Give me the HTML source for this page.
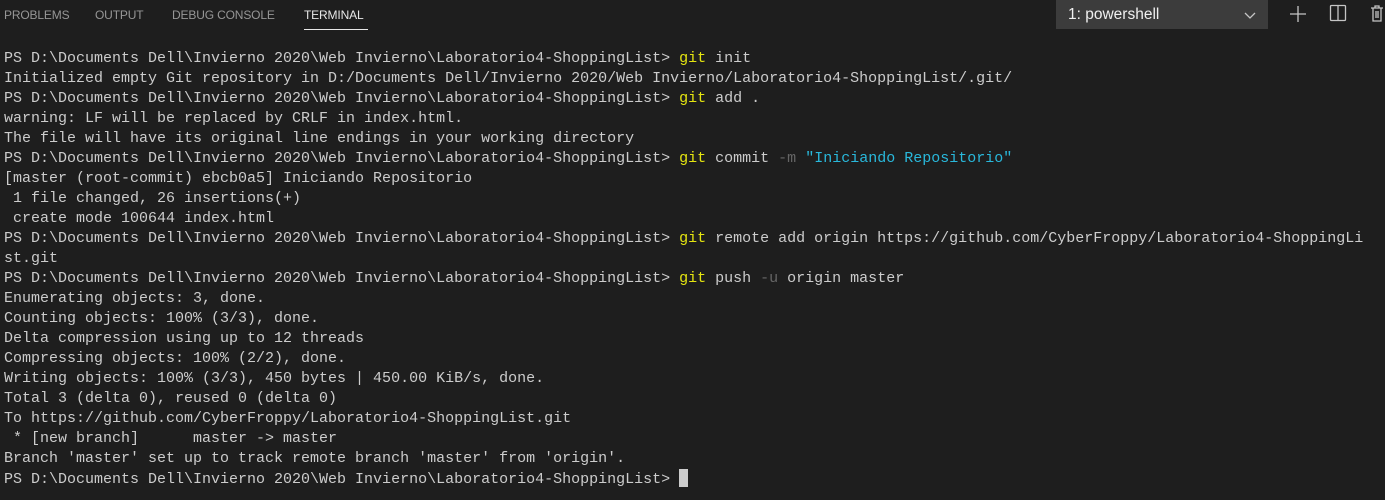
<!DOCTYPE html>
<html><head><meta charset="utf-8"><style>
body{margin:0;width:1385px;height:500px;background:#1e1e1e;overflow:hidden;position:relative;font-family:"Liberation Sans",sans-serif}
.tab{position:absolute;top:8px;font-size:12px;color:#969696;letter-spacing:-0.15px}
.act{color:#e7e7e7}
.ul{position:absolute;left:304px;top:29px;width:64px;height:1px;background:#e7e7e7}
.dd{position:absolute;left:1056px;top:0;width:212px;height:29px;background:#3c3c3c;color:#f0f0f0;font-size:15.5px}
pre{position:absolute;left:4px;top:49px;margin:0;font-family:"Liberation Mono",monospace;font-size:15px;line-height:20px;color:#cccccc}
.y{color:#e5e510}.g{color:#666666}.b{color:#29b8db}
.cur{display:inline-block;width:9px;height:18px;background:#cccccc;vertical-align:-4px}
</style></head><body>
<div class="tab" style="left:4px">PROBLEMS</div>
<div class="tab" style="left:95px">OUTPUT</div>
<div class="tab" style="left:172px">DEBUG CONSOLE</div>
<div class="tab act" style="left:304px">TERMINAL</div>
<div class="ul"></div>
<div class="dd"><span style="position:absolute;left:12px;top:6px">1: powershell</span>
<svg style="position:absolute;left:187px;top:10px" width="14" height="10"><path d="M2 3l5 5 5-5" stroke="#c5c5c5" stroke-width="1.3" fill="none"/></svg></div>
<svg style="position:absolute;left:1288px;top:4px" width="20" height="20"><path d="M10 2v16M2 10h16" stroke="#c5c5c5" stroke-width="1.3"/></svg>
<svg style="position:absolute;left:1329px;top:4px" width="18" height="18"><rect x="1.5" y="1.5" width="15" height="15" rx="1" stroke="#c5c5c5" stroke-width="1.3" fill="none"/><path d="M9 2v14" stroke="#c5c5c5" stroke-width="1.3"/></svg>
<svg style="position:absolute;left:1369px;top:3px" width="16" height="20"><path d="M2 5h12M6 5V3h4v2M4 5v13h8V5M7 8v7M9 8v7" stroke="#c5c5c5" stroke-width="1.3" fill="none"/></svg>
<pre>PS D:\Documents Dell\Invierno 2020\Web Invierno\Laboratorio4-ShoppingList&gt; <span class="y">git</span> init
Initialized empty Git repository in D:/Documents Dell/Invierno 2020/Web Invierno/Laboratorio4-ShoppingList/.git/
PS D:\Documents Dell\Invierno 2020\Web Invierno\Laboratorio4-ShoppingList&gt; <span class="y">git</span> add .
warning: LF will be replaced by CRLF in index.html.
The file will have its original line endings in your working directory
PS D:\Documents Dell\Invierno 2020\Web Invierno\Laboratorio4-ShoppingList&gt; <span class="y">git</span> commit <span class="g">-m</span> <span class="b">"Iniciando Repositorio"</span>
[master (root-commit) ebcb0a5] Iniciando Repositorio
 1 file changed, 26 insertions(+)
 create mode 100644 index.html
PS D:\Documents Dell\Invierno 2020\Web Invierno\Laboratorio4-ShoppingList&gt; <span class="y">git</span> remote add origin https://github.com/CyberFroppy/Laboratorio4-ShoppingLi
st.git
PS D:\Documents Dell\Invierno 2020\Web Invierno\Laboratorio4-ShoppingList&gt; <span class="y">git</span> push <span class="g">-u</span> origin master
Enumerating objects: 3, done.
Counting objects: 100% (3/3), done.
Delta compression using up to 12 threads
Compressing objects: 100% (2/2), done.
Writing objects: 100% (3/3), 450 bytes | 450.00 KiB/s, done.
Total 3 (delta 0), reused 0 (delta 0)
To https://github.com/CyberFroppy/Laboratorio4-ShoppingList.git
 * [new branch]      master -&gt; master
Branch 'master' set up to track remote branch 'master' from 'origin'.
PS D:\Documents Dell\Invierno 2020\Web Invierno\Laboratorio4-ShoppingList&gt; <span class="cur"></span></pre>
</body></html>
